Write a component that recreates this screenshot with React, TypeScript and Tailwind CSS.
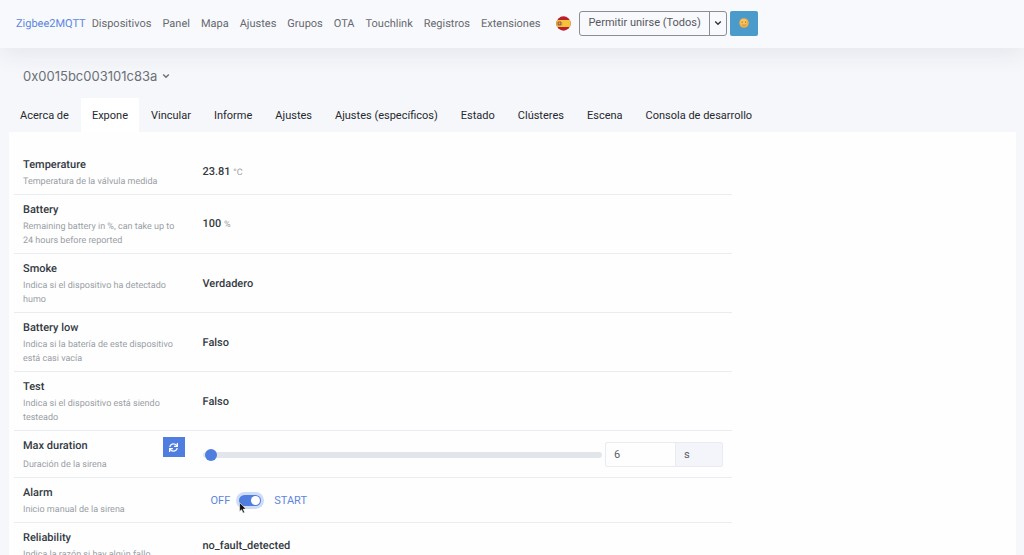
import { useState, type ReactNode } from "react";
import { FaSync } from "react-icons/fa";

const navLinks = ["Dispositivos", "Panel", "Mapa", "Ajustes", "Grupos", "OTA", "Touchlink", "Registros", "Extensiones"];

const tabs = [
  "Acerca de",
  "Expone",
  "Vincular",
  "Informe",
  "Ajustes",
  "Ajustes (específicos)",
  "Estado",
  "Clústeres",
  "Escena",
  "Consola de desarrollo",
];

function Chevron() {
  return (
    <svg viewBox="0 0 8 8" className="size-2" fill="none" stroke="currentColor" strokeWidth="1.4" aria-hidden="true">
      <path d="M1.2 2.6 4 5.3 6.8 2.6" />
    </svg>
  );
}

function SpainFlag() {
  return (
    <svg viewBox="0 0 15 15" className="size-[15px]" role="img" aria-label="Español">
      <clipPath id="flag-disc">
        <circle cx="7.5" cy="7.5" r="7.2" />
      </clipPath>
      <g clipPath="url(#flag-disc)">
        <rect width="15" height="15" fill="#b9202b" />
        <rect y="4" width="15" height="7" fill="#f5c33b" />
        <rect x="1.6" y="5.6" width="3.8" height="3.8" rx="1" fill="#a8562f" />
        <rect x="2.7" y="6.5" width="1.6" height="1.8" fill="#d9a08a" />
        <rect x="0.6" y="6" width="0.8" height="3.4" fill="#a58b5c" />
        <rect x="5.5" y="6" width="0.7" height="3.4" fill="#a58b5c" />
      </g>
    </svg>
  );
}

function Face() {
  return (
    <svg viewBox="0 0 10 10" className="size-[10px]" aria-hidden="true">
      <circle cx="5" cy="5" r="4.8" fill="#edac45" />
      <circle cx="4.6" cy="4.2" r="3.4" fill="#f6c35c" />
      <circle cx="3.2" cy="4.2" r="0.6" fill="#9a6a35" />
      <circle cx="6.6" cy="4.2" r="0.6" fill="#9a6a35" />
      <path d="M3.2 6.8q1.8.8 3.6 0" stroke="#b9793c" strokeWidth="0.7" fill="none" />
    </svg>
  );
}

function Pointer() {
  return (
    <svg viewBox="0 0 8 12" className="absolute top-[7px] left-0 h-3 w-2" aria-hidden="true">
      <path
        d="M0.6 0.6v8.9l2-1.8 1.4 3.4 1.6-.7-1.4-3.3h2.9z"
        fill="#111"
        stroke="#fff"
        strokeWidth="0.6"
      />
    </svg>
  );
}

type RowProps = { name: string; description: string; action?: ReactNode; children: ReactNode };

function Row({ name, description, action, children }: RowProps) {
  return (
    <div className="grid grid-cols-4 items-center border-b border-[#e9edf1] pt-[6px] pb-[5px]">
      <div className="flex justify-between px-[9px]">
        <div>
          <h2 className="text-[11px] leading-[17px] font-medium text-[#343a42]">{name}</h2>
          <p className={`mt-[2px] text-[9px] leading-[14px] text-[#9a9fa5] ${action ? "pt-[2px]" : ""}`}>{description}</p>
        </div>
        {action}
      </div>
      <div className="col-span-3 px-[9px] text-[11px] leading-[17px] font-medium text-[#343a42]">{children}</div>
    </div>
  );
}

function Unit({ children }: { children: ReactNode }) {
  return <span className="text-[9px] font-normal text-[#9a9fa5]">{children}</span>;
}

export default function App() {
  const [duration, setDuration] = useState(6);
  const [alarm, setAlarm] = useState(true);

  return (
    <div className="h-screen overflow-hidden bg-[#f5f7fb] font-['Roboto','Liberation_Sans',sans-serif] text-[11px] [text-rendering:geometricPrecision]">
      <header className="flex h-12 items-center bg-[#f8f9fd] pb-[2px] pl-4 shadow-[0_8px_22px_rgba(40,46,60,0.07)]">
        <nav className="flex pt-[2px] text-[#67696e]">
          <a href="#inicio" className="mr-[6px] text-[#5b87e0]">
            Zigbee2MQTT
          </a>
          <div className="flex gap-[11px]">
            {navLinks.map((label) => (
              <a key={label} href={`#${label.toLowerCase()}`}>
                {label}
              </a>
            ))}
          </div>
        </nav>
        <button type="button" aria-label="Idioma" className="ml-4">
          <SpainFlag />
        </button>
        <div className="ml-2 flex h-[25px] rounded-[3px] border border-[#8a8d93] text-[#55585e]">
          <button type="button" className="px-2">
            Permitir unirse (Todos)
          </button>
          <button type="button" aria-label="Elegir dispositivo" className="border-l border-[#8a8d93] px-1 text-[#33363b]">
            <Chevron />
          </button>
        </div>
        <button
          type="button"
          aria-label="Cambiar tema"
          className="ml-[3px] flex h-[25px] w-7 items-center justify-center rounded-[2px] bg-[#4a9acb]"
        >
          <Face />
        </button>
      </header>

      <main className="pt-[18px] pr-2 pl-[9px]">
        <h1 className="px-[14px] font-['Inter','Liberation_Sans',sans-serif] text-[13px] leading-5 text-[#6c7076]">
          <button type="button" className="flex items-center gap-[5px]">
            0x0015bc003101c83a
            <Chevron />
          </button>
        </h1>
        <div role="tablist" className="mt-3 flex gap-px">
          {tabs.map((label) => (
            <button
              key={label}
              type="button"
              role="tab"
              aria-selected={label === "Expone"}
              className={`h-[34px] px-[11px] pt-[2px] text-[#26292e] ${label === "Expone" ? "bg-white" : ""}`}
            >
              {label}
            </button>
          ))}
        </div>

        <section className="bg-[#fefefe] px-[5px] pt-[18px] pb-4">
          <div className="max-w-[718px]">
            <Row name="Temperature" description="Temperatura de la válvula medida">
              23.81 <Unit>°C</Unit>
            </Row>
            <Row name="Battery" description="Remaining battery in %, can take up to 24 hours before reported">
              100 <Unit>%</Unit>
            </Row>
            <Row name="Smoke" description="Indica si el dispositivo ha detectado humo">
              Verdadero
            </Row>
            <Row name="Battery low" description="Indica si la batería de este dispositivo está casi vacía">
              Falso
            </Row>
            <Row name="Test" description="Indica si el dispositivo está siendo testeado">
              Falso
            </Row>
            <Row
              name="Max duration"
              description="Duración de la sirena"
              action={
                <button
                  type="button"
                  aria-label="Actualizar"
                  className="flex h-5 w-[22px] items-center justify-center bg-[#4f7ee0] text-white"
                >
                  <FaSync className="size-[9px]" />
                </button>
              }
            >
              <div className="flex items-center">
                <input
                  type="range"
                  aria-label="Duración máxima"
                  min={0}
                  max={900}
                  value={duration}
                  onChange={(e) => setDuration(Number(e.target.value))}
                  className="h-[6px] min-w-0 flex-1 appearance-none rounded-full bg-[#e2e6ea] [&::-webkit-slider-thumb]:size-3 [&::-webkit-slider-thumb]:appearance-none [&::-webkit-slider-thumb]:rounded-full [&::-webkit-slider-thumb]:bg-[#4f7ee0]"
                />
                <div className="ml-[3px] flex h-[25px] w-[118px] rounded-[2px] border border-[#e8ebf1] font-normal text-[#5c6066]">
                  <input
                    type="text"
                    inputMode="numeric"
                    aria-label="Segundos"
                    value={duration}
                    onChange={(e) => setDuration(Number(e.target.value) || 0)}
                    className="min-w-0 flex-1 px-2"
                  />
                  <span className="flex w-[47px] items-center border-l border-[#e8ebf1] bg-[#f4f5fa] px-2">s</span>
                </div>
              </div>
            </Row>
            <Row name="Alarm" description="Inicio manual de la sirena">
              <div className="flex items-center px-2 font-normal text-[#5d86dc]">
                <button type="button" onClick={() => setAlarm(false)}>
                  OFF
                </button>
                <span className="relative mx-[9px] flex">
                  <input
                    type="checkbox"
                    role="switch"
                    aria-label="Alarm"
                    checked={alarm}
                    onChange={(e) => setAlarm(e.target.checked)}
                    className="h-[11px] w-[22px] appearance-none rounded-full bg-[#c8ccd2] ring-[3px] ring-[#cfdcf7] before:block before:size-[9px] before:translate-x-px before:translate-y-px before:rounded-full before:bg-white checked:bg-[#4f7ee0] checked:before:translate-x-3"
                  />
                  <Pointer />
                </span>
                <button type="button" onClick={() => setAlarm(true)} className="ml-1">
                  START
                </button>
              </div>
            </Row>
            <Row name="Reliability" description="Indica la razón si hay algún fallo">
              no_fault_detected
            </Row>
          </div>
        </section>
      </main>
    </div>
  );
}
